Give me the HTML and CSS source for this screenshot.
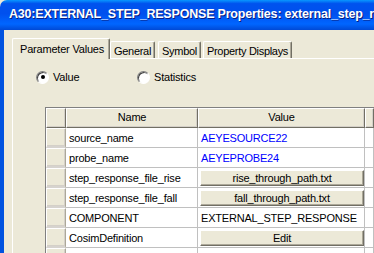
FILE: index.html
```html
<!DOCTYPE html>
<html lang="en">
<head>
    <meta charset="UTF-8">
    <title>A30:EXTERNAL_STEP_RESPONSE Properties</title>
    <link rel="stylesheet" href="styles.css">
</head>
<body>
    <div class="window">
        <div class="titlebar">A30:EXTERNAL_STEP_RESPONSE Properties: external_step_response</div>
        <div class="client">
            <div class="tabs">
                <div class="tab active">Parameter Values</div>
                <div class="tab">General</div>
                <div class="tab">Symbol</div>
                <div class="tab">Property Displays</div>
            </div>
            <div class="panel">
                <div class="radios">
                    <label class="radio"><span class="dot checked"></span>Value</label>
                    <label class="radio"><span class="dot"></span>Statistics</label>
                </div>
                <div class="grid">
                    <div class="hcell corner"></div>
                    <div class="hcell">Name</div>
                    <div class="hcell">Value</div>
                    <div class="hcell extra"></div>

                    <div class="rowhead"></div>
                    <div class="cell">source_name</div>
                    <div class="cell link">AEYESOURCE22</div>
                    <div class="cell extra"></div>

                    <div class="rowhead"></div>
                    <div class="cell">probe_name</div>
                    <div class="cell link">AEYEPROBE24</div>
                    <div class="cell extra"></div>

                    <div class="rowhead"></div>
                    <div class="cell">step_response_file_rise</div>
                    <div class="cell btn-cell"><button type="button" class="btn">rise_through_path.txt</button></div>
                    <div class="cell extra"></div>

                    <div class="rowhead"></div>
                    <div class="cell">step_response_file_fall</div>
                    <div class="cell btn-cell"><button type="button" class="btn">fall_through_path.txt</button></div>
                    <div class="cell extra"></div>

                    <div class="rowhead"></div>
                    <div class="cell">COMPONENT</div>
                    <div class="cell">EXTERNAL_STEP_RESPONSE</div>
                    <div class="cell extra"></div>

                    <div class="rowhead"></div>
                    <div class="cell">CosimDefinition</div>
                    <div class="cell btn-cell"><button type="button" class="btn">Edit</button></div>
                    <div class="cell extra"></div>

                    <div class="rowhead"></div>
                    <div class="cell">OnCheck</div>
                    <div class="cell">Default Handler</div>
                    <div class="cell extra"></div>
                </div>
            </div>
        </div>
    </div>
</body>
</html>
```

FILE: styles.css
```css
* { margin: 0; padding: 0; box-sizing: border-box; }
html, body { width: 374px; height: 253px; overflow: hidden; }
body {
    background: #ECE9D8;
    font-family: 'Liberation Sans', Arial, sans-serif;
    font-size: 11px;
    letter-spacing: -0.2px;
    color: #000;
}
.window { display: flex; flex-direction: column; height: 253px; overflow: hidden; }
.titlebar {
    height: 30px;
    flex: none;
    padding: 7px 0 0 9px;
    white-space: nowrap;
    overflow: hidden;
    color: #fff;
    font-weight: bold;
    font-size: 12.5px;
    letter-spacing: -0.2px;
    text-shadow: 1px 1px 0 #0A1E80;
    background: linear-gradient(to bottom, #0997FF 0%, #0053EE 12%, #0050EE 45%, #0066FF 80%, #0049D5 100%);
    border-radius: 7px 0 0 0;
}
.client {
    flex: 1;
    border-left: 4px solid #0052E0;
    padding: 8px 0 0 8px;
    overflow: hidden;
}

/* tabs */
.tabs { display: flex; align-items: flex-end; height: 20px; }
.tab {
    height: 17px;
    padding: 2px 3px 0 3px;
    border-top: 1px solid #fff;
    border-left: 1px solid #fff;
    border-right: 1px solid #716F64;
    box-shadow: inset -1px 0 0 #ACA899;
    border-radius: 2px 2px 0 0;
    background: #ECE9D8;
    margin-left: 3px;
    line-height: 14px;
    letter-spacing: -0.3px;
    white-space: nowrap;
}
.tab.active {
    height: 21px;
    margin-left: 0;
    padding: 3px 5px 0 7px;
    letter-spacing: -0.2px;
    position: relative;
    z-index: 1;
    margin-bottom: -1px;
}
.tab:nth-child(2) { margin-left: 0; }
.tab:nth-child(4) { margin-left: 2px; }
.panel {
    border-top: 1px solid #fff;
    border-left: 1px solid #fff;
    background: #ECE9D8;
    height: 210px;
    padding: 0 0 0 32px;
}

/* radios */
.radios { display: flex; height: 48px; padding-top: 11px; }
.radio { display: flex; align-items: center; height: 14px; }
.radio:first-child { width: 101px; margin-left: -9px; }
.dot {
    width: 13px; height: 13px;
    border-radius: 50%;
    border: 1px solid;
    border-color: #808080 #fff #fff #808080;
    background: #fff;
    box-shadow: inset 1px 1px 0 #404040;
    margin-right: 4px;
    display: flex; align-items: center; justify-content: center;
}
.dot.checked::after {
    content: "";
    width: 4px; height: 4px;
    border-radius: 50%;
    background: #000;
}

/* grid */
.grid {
    display: grid;
    grid-template-columns: 20px 132px 167px 1fr;
    grid-auto-rows: 20px;
    border-top: 1px solid #808080;
    border-left: 1px solid #808080;
    background: #fff;
}
.hcell, .rowhead {
    background: #ECE9D8;
    border-top: 1px solid #fff;
    border-left: 1px solid #fff;
    border-right: 1px solid #808080;
    border-bottom: 1px solid #808080;
    box-shadow: inset -1px -1px 0 #D4D0C8;
}
.hcell {
    text-align: center;
    line-height: 17px;
    border-bottom-color: #716F64;
    border-right-color: #716F64;
}
.rowhead { border-bottom: 2px solid #D6D3CE; border-right-color: #ACA899; }
.cell {
    border-right: 1px solid #C0C0C0;
    border-bottom: 1px solid #C0C0C0;
    padding: 2px 0 0 3px;
    line-height: 16px;
    white-space: nowrap;
    overflow: hidden;
}
.cell.link { color: #0000FF; }
.btn-cell { padding: 2px 0 0 2px; }
.btn {
    display: block;
    width: 164px;
    height: 16px;
    font-family: 'Liberation Sans', Arial, sans-serif;
    font-size: 11px;
    letter-spacing: -0.2px;
    line-height: 13px;
    background: #ECE9D8;
    border: 1px solid;
    border-color: #FFFFFF #716F64 #716F64 #FFFFFF;
    box-shadow: inset -1px -1px 0 #ACA899;
    color: #000;
}
```
